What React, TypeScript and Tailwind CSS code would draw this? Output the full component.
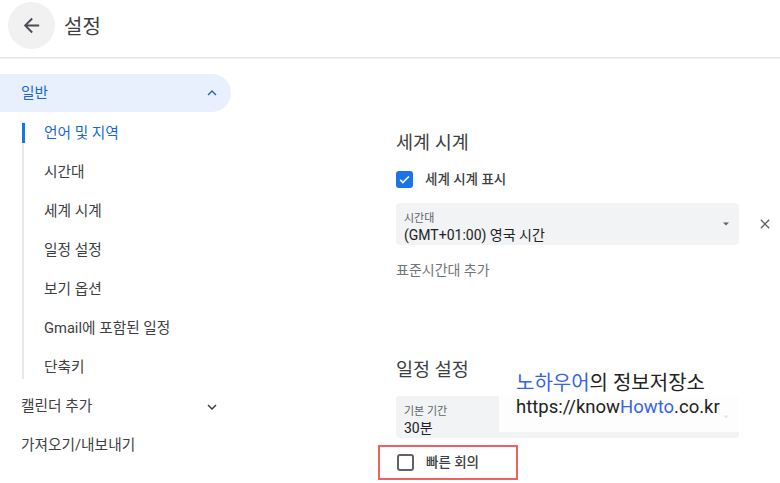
import React from 'react';

const FONT = 'font-["Roboto","Noto_Sans_CJK_KR",sans-serif]';

const subItems = ['언어 및 지역', '시간대', '세계 시계', '일정 설정', '보기 옵션', 'Gmail에 포함된 일정', '단축키'];

const ChevronUp = () => (
  <svg width="18" height="18" viewBox="0 0 24 24" fill="#1967d2">
    <path d="M7.41 15.41 12 10.83l4.59 4.58L18 14l-6-6-6 6z" />
  </svg>
);

const ChevronDown = () => (
  <svg width="18" height="18" viewBox="0 0 24 24" fill="#3c4043">
    <path d="M7.41 8.59 12 13.17l4.59-4.58L18 10l-6 6-6-6z" />
  </svg>
);

const Caret = () => (
  <svg width="10" height="10" viewBox="0 0 10 10" fill="#5f6368">
    <path d="M2 3.5h6L5 6.5z" />
  </svg>
);

const App: React.FC = () => {
  return (
    <div className={`${FONT} relative h-[483px] w-[780px] overflow-hidden bg-white text-[#3c4043]`}>
      {/* Шапка */}
      <div className="flex h-[58px] items-center border-b border-[#e3e3e3] shadow-[0_1px_1px_rgba(0,0,0,0.04)]">
        <div className="ml-[8px] -mt-[6px] flex h-[47px] w-[47px] items-center justify-center rounded-full bg-[#f1f1f1]">
          <svg width="23" height="23" viewBox="0 0 24 24" fill="#4a4d51">
            <path d="M20 11H7.83l5.59-5.59L12 4l-8 8 8 8 1.41-1.41L7.83 13H20v-2z" />
          </svg>
        </div>
        <div className="ml-[9px] -mt-[4px] text-[20px]">설정</div>
      </div>

      <div className="flex">
        {/* Боковое меню */}
        <div className="w-[256px] shrink-0 pt-[16px] text-[14.7px]">
          <div className="flex h-[38px] w-[231px] items-center justify-between rounded-r-full bg-[#e8f0fe] pl-[21px] pr-[10px] text-[#1967d2]">
            <span>일반</span>
            <ChevronUp />
          </div>

          <div className="relative pt-[2px]">
            <div className="absolute left-[22px] top-[10px] bottom-[8px] w-[2px] bg-[#e8e8e8]" />
            <div className="absolute left-[22px] top-[11px] h-[20px] w-[3px] bg-[#1a73e8]" />
            {subItems.map((item, i) => (
              <div
                key={item}
                className={`flex h-[39px] items-center pl-[44px] ${i === 0 ? 'text-[#1967d2]' : ''}`}
              >
                {item}
              </div>
            ))}
          </div>

          <div className="flex h-[39px] w-[231px] items-center justify-between pl-[21px] pr-[10px]">
            <span>캘린더 추가</span>
            <ChevronDown />
          </div>
          <div className="flex h-[39px] items-center pl-[21px]">가져오기/내보내기</div>
        </div>

        {/* Основной контент */}
        <div className="ml-[140px] w-[343px] pt-[73px]">
          <div className="text-[18.5px] leading-[24px]">세계 시계</div>

          <div className="mt-[16px] flex h-[16px] items-center gap-[12px]">
            <div className="flex h-[17px] w-[17px] items-center justify-center rounded-[3px] bg-[#1a73e8]">
              <svg width="13" height="13" viewBox="0 0 24 24" fill="none" stroke="white" strokeWidth="3">
                <path d="M4 12.5l5 5L20 6.5" />
              </svg>
            </div>
            <span className="text-[13.5px] font-medium">세계 시계 표시</span>
          </div>

          <div className="relative mt-[16px] flex h-[42px] items-center rounded-[4px] bg-[#f1f3f4] pl-[8px] pr-[8px]">
            <div className="flex-1 pt-[6px] leading-none">
              <div className="text-[11px] text-[#5f6368]">시간대</div>
              <div className="mt-[4px] text-[14px] text-[#202124]">(GMT+01:00) 영국 시간</div>
            </div>
            <Caret />
            <div className="absolute -right-[34px] top-[13px]">
              <svg width="16" height="16" viewBox="0 0 24 24" fill="#5f6368">
                <path d="M19 6.41 17.59 5 12 10.59 6.41 5 5 6.41 10.59 12 5 17.59 6.41 19 12 13.41 17.59 19 19 17.59 13.41 12z" />
              </svg>
            </div>
          </div>

          <div className="mt-[15px] text-[14px] text-[#70757a]">표준시간대 추가</div>

          <div className="mt-[77px] text-[18.5px] leading-[24px]">일정 설정</div>

          <div className="mt-[14px] flex h-[42px] items-center rounded-[4px] bg-[#f1f3f4] pl-[8px] pr-[8px]">
            <div className="flex-1 pt-[6px] leading-none">
              <div className="text-[11px] text-[#5f6368]">기본 기간</div>
              <div className="mt-[4px] text-[14px] text-[#202124]">30분</div>
            </div>
            <Caret />
          </div>

          <div className="-ml-[18px] mt-[7px] flex h-[35px] w-[140px] items-center gap-[12px] border-2 border-[#f26060] pl-[17px]">
            <div className="h-[17px] w-[17px] rounded-[3px] border-2 border-[#5f6368]" />
            <span className="text-[13.5px] font-medium">빠른 회의</span>
          </div>
        </div>
      </div>

      {/* Водяной знак */}
      <div className="absolute left-[499px] top-[396px] h-[36px] w-[241px] bg-white/85" />
      <div className="absolute left-[516px] top-[371px] leading-[24px] text-[#222]">
        <div className="text-[20px]">
          <span className="text-[#3a63e8]">노하우어</span>의 정보저장소
        </div>
        <div className="text-[18.5px]">
          https://know<span className="text-[#3a63e8]">Howto</span>.co.kr
        </div>
      </div>
    </div>
  );
};

export default App;
